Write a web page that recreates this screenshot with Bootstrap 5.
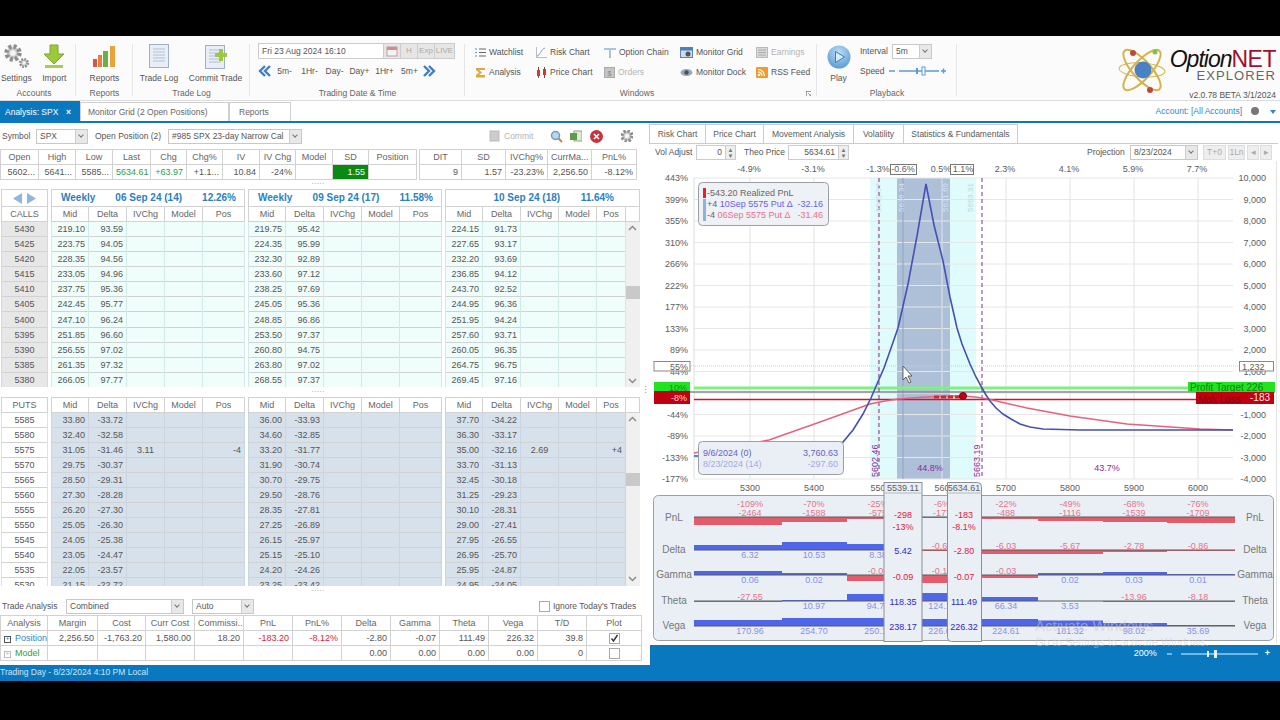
<!DOCTYPE html>
<html lang="en">
<head>
<meta charset="UTF-8">
<title>OptionNET Explorer</title>
<link href="https://cdn.jsdelivr.net/npm/bootstrap@5.3.0/dist/css/bootstrap.min.css" rel="stylesheet">
<style>
:root { --app-blue: #0a78be; --line: #d4d4d4; --ink: #555; }
html, body { height: 100%; }
body { background: #000; font-family: "Liberation Sans", Arial, sans-serif; font-size: 8.5px; color: var(--ink); overflow: hidden; }
.app-frame { margin-top: 36px; height: 645px; width: 1280px; background: #fff; display: flex; flex-direction: column; }

/* ribbon */
.ribbon-bar { height: 65px; background: #fbfbfb; border-bottom: 1px solid #ddd; display: flex; flex: none; }
.rb-group { display: flex; flex-direction: column; flex: none; position: relative; }
.rb-group::after { content: ""; position: absolute; right: 0; top: 8px; bottom: 4px; width: 1px; background: #e6e6e6; }
.rb-body { flex: 1; display: flex; }
.rb-label { height: 14px; line-height: 14px; text-align: center; color: #666; }
.rb-big { display: flex; flex-direction: column; align-items: center; justify-content: flex-end; white-space: nowrap; padding-bottom: 1px; }
.rb-big svg { display: block; margin-bottom: 3px; }
.rb-win-grid { display: grid; grid-template-columns: 61px 68px 76px 76px 60px; grid-auto-rows: 20px; padding: 6px 0 0 10px; }
.rb-win-item { display: flex; align-items: center; gap: 3px; white-space: nowrap; }
.rb-win-item svg { flex: none; }
.is-off { color: #b4b4b4; }
.date-box { display: flex; height: 16px; width: 197px; margin: 7px 0 0 8px; border: 1px solid #ccc; background: #fff; }
.date-text { flex: 1; padding-left: 3px; line-height: 14px; color: #555; }
.date-btn { width: 17px; border-left: 1px solid #ccc; background: #e6e6e6; text-align: center; line-height: 14px; color: #aaa; font-size: 8px; }
.date-nav { display: flex; align-items: center; margin: 4px 0 0 8px; height: 16px; }
.date-nav span { width: 25px; text-align: center; color: #555; }
.logo-block { margin-left: auto; width: 162px; display: flex; position: relative; }
.logo-text { margin: 11px 0 0 0; width: 109px; text-align: right; }
.logo-name { font-size: 23px; line-height: 24px; font-style: italic; color: #111; letter-spacing: -1px; white-space: nowrap; }
.logo-name b { color: #a3102f; font-style: normal; font-weight: 400; letter-spacing: -.5px; }
.logo-sub { font-size: 13px; line-height: 10px; color: #666; letter-spacing: 1.1px; }
.logo-ver { margin-top: 9px; line-height: 10px; color: #555; white-space: nowrap; }
.play-col { width: 43px; }
.speed-row { display: flex; align-items: center; gap: 2px; height: 20px; }

/* tabs */
.doc-tabs { height: 22px; flex: none; display: flex; border-bottom: 2px solid var(--app-blue); }
.doc-tab { border: 1px solid #d0d0d0; border-bottom: 0; padding: 0 7px; line-height: 18px; color: #666; margin-top: 1px; white-space: nowrap; }
.doc-tab.is-on { background: var(--app-blue); color: #fff; border-color: var(--app-blue); width: 80px; padding: 0 8px 0 4px; display: flex; justify-content: space-between; margin-top: 0; line-height: 20px; }
.acct-line { margin-left: auto; display: flex; align-items: center; color: #2f86c8; padding-right: 4px; }
.acct-dot { width: 8px; height: 8px; border-radius: 50%; background: #777; margin: 0 11px 0 9px; }
.acct-tri { border: 3px solid transparent; border-top: 4px solid #2f86c8; margin-top: 4px; }

/* panes */
.main-row { flex: 1; display: flex; min-height: 0; }
.left-pane { width: 650px; flex: none; display: flex; flex-direction: column; }
.right-pane { width: 630px; flex: none; display: flex; flex-direction: column; position: relative; }
.tool-row { height: 26px; flex: none; display: flex; align-items: center; padding-left: 2px; white-space: nowrap; }
.drop-box { display: flex; height: 15px; border: 1px solid #c8c8c8; background: #fff; align-items: stretch; flex: none; }
.drop-box > span:first-child { flex: 1; padding-left: 3px; line-height: 13px; overflow: hidden; white-space: nowrap; }
.drop-caret { width: 12px; flex: none; background: #e8e8e8; border-left: 1px solid #ccc; position: relative; }
.drop-caret::after { content: ""; position: absolute; left: 3px; top: 3px; width: 4px; height: 4px; border-right: 1px solid #777; border-bottom: 1px solid #777; transform: rotate(45deg); }

/* data grids */
table.grid-tbl { width: 100%; table-layout: fixed; margin: 0; font-size: 9px; color: var(--ink); border-color: #d2d2d2; --bs-table-color: var(--ink); --bs-table-border-color: #d2d2d2; }
table.grid-tbl > :not(caption) > * > * { padding: 0 3px; height: 15px; line-height: 14px; white-space: nowrap; overflow: hidden; border-color: var(--cell-line, #d2d2d2); vertical-align: middle; }
table.grid-tbl th { font-weight: 400; text-align: center; color: #666; background: #fff; --cell-line: #d2d2d2; }
table.grid-tbl td { text-align: right; }
.chain-grid { display: grid; grid-template-columns: 47px 194px 194px 194px; column-gap: 3px; padding-left: 1px; flex: none; overflow: hidden; }
.is-calls { height: 198px; }
.is-puts { height: 189px; }
.is-calls .chain-body td { background: #effdfb; --cell-line: #d3ebe7; }
.is-puts .chain-body td { background: #d7e1eb; --cell-line: #cbd5df; }
.is-calls table.strike-col td { background: #e7e7e7; --cell-line: #d8d8d8; text-align: center; }
.is-puts table.strike-col td { background: #fff; --cell-line: #e2e2e2; text-align: center; }
table.grid-tbl .exp-head th { height: 17px; color: #2a7fc2; font-weight: 700; font-size: 10px; }
.exp-line { display: flex; justify-content: space-between; padding: 0 5px 0 6px; text-align: left; }
.exp-line span:first-child { min-width: 33px; }
.exp-line.has-scroll { padding-right: 22px; }
.exp-line.has-scroll span:first-child { min-width: 18px; }
.exp-arrows { display: flex; justify-content: center; gap: 3px; align-items: center; }
table.grid-tbl td.scroll-cell { padding: 0; background: #f0f0f0 !important; border: 0; vertical-align: top; overflow: hidden; }
.scroll-track { display: flex; flex-direction: column; align-items: center; justify-content: space-between; padding: 3px 0; position: relative; }
.scroll-thumb { position: absolute; left: 0; right: 0; height: 13px; background: #c9c9c9; }
.grip-dots { flex: none; height: 10px; width: 636px; text-align: center; line-height: 6px; color: #999; font-size: 8px; letter-spacing: .5px; position: relative; }
.grip-tall { height: 12px; }
.grip-side { position: absolute; left: 641px; top: -2px; font-size: 9px; letter-spacing: 0; line-height: 10px; }
.quote-wrap { display: flex; gap: 2px; flex: none; height: 30px; }
table.grid-tbl.qt-a { width: 417px; flex: none; }
table.grid-tbl.qt-b { width: 218px; flex: none; }
.sd-cell { background: #0a8a12 !important; color: #fff !important; --bs-table-bg: #0a8a12; }
.txt-up { color: #2f9e3f !important; }
.txt-down { color: #e01a3c !important; }
.txt-link { color: #2f86c8 !important; }
table.grid-tbl td.txt-start { text-align: left; }
.tree-box { display: inline-block; width: 7px; height: 7px; border: 1px solid #555; margin-right: 4px; line-height: 4px; font-size: 7px; text-align: center; }
.tick-box { display: inline-block; width: 11px; height: 11px; border: 1px solid #aaa; background: #fff; vertical-align: middle; position: relative; }
.tick-box svg { position: absolute; left: 0; top: 0; }
.sum-wrap { flex: none; width: 642px; }

/* right pane */
.chart-tabs { display: flex; height: 20px; flex: none; margin: 1px 2px 0 -1px; border-bottom: 1px solid #ccc; }
.chart-tab { border: 1px solid #ccc; border-left-width: 0; border-bottom: 0; text-align: center; line-height: 19px; color: #5a5a5a; }
.chart-tab:first-child { border-left-width: 1px; }
.chart-tools { height: 17px; flex: none; display: flex; align-items: center; padding-left: 5px; white-space: nowrap; }
.spin-box { display: flex; height: 15px; border: 1px solid #ccc; background: #fff; justify-content: flex-end; flex: none; }
.spin-val { padding-right: 3px; line-height: 13px; }
.spin-btn { width: 10px; background: #eee; border-left: 1px solid #ccc; text-align: center; line-height: 6px; font-size: 6px; color: #777; padding-top: 1px; }
.proj-btn { height: 15px; border: 1px solid #ddd; background: #eee; color: #aaa; line-height: 13px; text-align: center; margin-left: 1px; flex: none; }
.chart-svg { display: block; flex: none; width: 630px; height: 484px; font-family: "Liberation Sans", Arial, sans-serif; font-size: 9px; }
.zoom-foot { height: 21px; flex: none; background: var(--app-blue); color: #fff; display: flex; align-items: center; justify-content: flex-end; padding: 0 10px 4px 0; font-size: 9px; }
.status-bar { height: 16px; flex: none; background: var(--app-blue); color: #cfe6f5; line-height: 15px; }
.win-water { position: absolute; left: 385px; bottom: 14px; color: rgba(205,205,205,.55); line-height: 17px; white-space: nowrap; font-size: 11px; pointer-events: none; }
.win-water div:first-child { font-size: 15px; }
.ax { fill: #5c5c5c; }
.ax-mid { text-anchor: middle; }
.ax-end { text-anchor: end; }
.lbl-neg { fill: #e8728c; text-anchor: middle; }
.lbl-pos { fill: #8a90e6; text-anchor: middle; }
.lbl-row { fill: #777; text-anchor: middle; font-size: 10px; }
.box-neg { fill: #e2183a; text-anchor: middle; }
.box-pos { fill: #2a2ad0; text-anchor: middle; }
</style>
</head>
<body>
<svg width="0" height="0" class="position-absolute">
  <defs>
    <g id="ic-gear"><circle r="5" fill="#c9c9c9" stroke="#8d8d8d" stroke-width="3.4" stroke-dasharray="2.2 1.7"/><circle r="2.2" fill="#f4f4f4"/></g>
    <g id="ic-doc"><rect x=".5" y=".5" width="19" height="23" fill="#e9eef6" stroke="#9fb0c4"/><path d="M4 5h12M4 8h12M4 11h12M4 14h12M4 17h12" stroke="#b3bfd0"/></g>
  </defs>
</svg>
<div class="app-frame">
  <div class="ribbon-bar">
    <div class="rb-group" style="width:76px">
      <div class="rb-body">
        <div class="rb-big" style="width:33px"><svg width="26" height="25"><g transform="translate(10,9) scale(1.3)"><use href="#ic-gear"/></g><g transform="translate(21,19) scale(.75)"><use href="#ic-gear"/></g></svg>Settings</div>
        <div class="rb-big" style="width:44px"><svg width="22" height="25"><path d="M7 1h8v9h6l-10 10L1 10h6z" fill="#9cc83c" stroke="#7fa62a"/><rect x="2" y="21" width="18" height="3" fill="#a8cc50"/></svg>Import</div>
      </div>
      <div class="rb-label" style="padding-right:8px">Accounts</div>
    </div>
    <div class="rb-group" style="width:57px">
      <div class="rb-body justify-content-center">
        <div class="rb-big"><svg width="24" height="25"><rect x="1" y="15" width="4" height="8" fill="#d9534f"/><rect x="6" y="11" width="4" height="12" fill="#e87f3a"/><rect x="11" y="7" width="5" height="16" fill="#6fae44"/><rect x="18" y="2" width="5" height="21" fill="#e8a33a"/></svg>Reports</div>
      </div>
      <div class="rb-label">Reports</div>
    </div>
    <div class="rb-group" style="width:117px">
      <div class="rb-body">
        <div class="rb-big" style="width:52px"><svg width="20" height="25"><use href="#ic-doc"/></svg>Trade Log</div>
        <div class="rb-big" style="width:61px"><svg width="28" height="25"><g transform="translate(3,1)"><use href="#ic-doc"/></g><path d="M17 5h4v4h4v4h-4v4h-4v-4h-4V9h4z" fill="#9cc83c"/></svg>Commit Trade</div>
      </div>
      <div class="rb-label">Trade Log</div>
    </div>
    <div class="rb-group" style="width:215px">
      <div class="rb-body flex-column">
        <div class="date-box"><span class="date-text">Fri 23 Aug 2024 16:10</span><span class="date-btn"><svg width="12" height="12"><rect x="1" y="2" width="10" height="9" fill="#f4f4f4" stroke="#c99"/><rect x="1" y="2" width="10" height="3" fill="#d98a8a"/></svg></span><span class="date-btn">H</span><span class="date-btn">Exp</span><span class="date-btn" style="width:20px">LIVE</span></div>
        <div class="date-nav">
          <svg width="14" height="12"><path d="M7 1L2 6l5 5M12 1L7 6l5 5" fill="none" stroke="#3f7fc4" stroke-width="2.4"/></svg>
          <span>5m-</span><span>1Hr-</span><span>Day-</span><span>Day+</span><span>1Hr+</span><span>5m+</span>
          <svg width="14" height="12"><path d="M2 1l5 5-5 5M7 1l5 5-5 5" fill="none" stroke="#3f7fc4" stroke-width="2.4"/></svg>
        </div>
      </div>
      <div class="rb-label">Trading Date &amp; Time</div>
    </div>
    <div class="rb-group" style="width:352px">
      <div class="rb-body">
        <div class="rb-win-grid">
          <div class="rb-win-item"><svg width="11" height="11"><path d="M4 2h7M4 5.500h7M4 9h7" stroke="#666"/><path d="M0 2h2M0 5.500h2M0 9h2" stroke="#5b8fc7"/></svg>Watchlist</div>
          <div class="rb-win-item"><svg width="11" height="11"><path d="M0 10.500h11M.5 0v11" stroke="#bbb"/><path d="M1 9c3 0 4-7 8-8" fill="none" stroke="#7a9ccc"/></svg>Risk Chart</div>
          <div class="rb-win-item"><svg width="12" height="11"><path d="M0 1h12v2H7v8H5V3H0z" fill="#a9c3e2"/></svg>Option Chain</div>
          <div class="rb-win-item"><svg width="13" height="11"><rect x=".5" y=".5" width="12" height="10" fill="#cfdcec" stroke="#5e86b5"/><rect x=".5" y=".5" width="12" height="3" fill="#4a7fb8"/><circle cx="8" cy="7" r="2.500" fill="#555"/></svg>Monitor Grid</div>
          <div class="rb-win-item is-off"><svg width="12" height="11"><rect x=".5" y=".5" width="11" height="10" fill="#d9d9d9" stroke="#bbb"/><path d="M2 3h8M2 5.500h8M2 8h8" stroke="#aaa"/></svg>Earnings</div>
          <div class="rb-win-item"><svg width="11" height="11"><path d="M1 1h9v2H4l3 2.500L4 8h6v2.500H1V8l3-2.500L1 3z" fill="#e0a83c"/></svg>Analysis</div>
          <div class="rb-win-item"><svg width="11" height="11"><path d="M2.500 0v11M8.500 0v11" stroke="#555"/><rect x="1" y="3" width="3" height="6" fill="#d33"/><rect x="7" y="2" width="3" height="6" fill="#d33"/></svg>Price Chart</div>
          <div class="rb-win-item is-off"><svg width="11" height="11"><rect x=".5" y=".5" width="10" height="10" fill="#c4c4c4" stroke="#aaa"/><text x="3.500" y="8.500" font-size="7" fill="#888">$</text></svg>Orders</div>
          <div class="rb-win-item"><svg width="13" height="11"><ellipse cx="6.500" cy="5.500" rx="6" ry="3.500" fill="#9aa9b8"/><circle cx="6.500" cy="5.500" r="2.200" fill="#44525f"/></svg>Monitor Dock</div>
          <div class="rb-win-item"><svg width="12" height="11"><rect width="12" height="11" rx="1" fill="#f29a2e"/><circle cx="3" cy="8" r="1.300" fill="#fff"/><path d="M2 5a4 4 0 0 1 4 4M2 2.500a6.500 6.500 0 0 1 6.500 6.500" fill="none" stroke="#fff" stroke-width="1.200"/></svg>RSS Feed</div>
        </div>
      </div>
      <div class="rb-label" style="padding-right:8px">Windows</div>
      <svg width="5" height="5" class="position-absolute" style="right:6px;bottom:4px"><path d="M0 .5h5M.5 0v5M2 2l3 3M5 3v2H3" fill="none" stroke="#888" stroke-width=".8"/></svg>
    </div>
    <div class="rb-group" style="width:140px">
      <div class="rb-body">
        <div class="rb-big play-col"><svg width="24" height="24"><defs><radialGradient id="playFill" cy=".3" r=".8"><stop offset="0" stop-color="#bcdcf4"/><stop offset="1" stop-color="#4d93cf"/></radialGradient></defs><circle cx="12" cy="12" r="11.500" fill="url(#playFill)"/><path d="M8.500 6.500v11l9-5.500z" fill="#d5ebfa" stroke="#3a7fba"/></svg>Play</div>
        <div class="flex-grow-1" style="padding-top:5px">
          <div class="speed-row"><span style="width:30px">Interval</span><div class="drop-box" style="width:40px"><span>5m</span><span class="drop-caret"></span></div></div>
          <div class="speed-row"><span style="width:26px">Speed</span><svg width="58" height="10"><path d="M1 5h6M11 5h40M53 5h5M55.500 2.500v5" stroke="#5b9bd5" stroke-width="1.400"/><rect x="28" y="2" width="2" height="6" fill="#5b9bd5"/><rect x="34" y="1" width="3" height="8" fill="#fff" stroke="#5b9bd5"/></svg></div>
        </div>
      </div>
      <div class="rb-label">Playback</div>
    </div>
    <div class="logo-block">
      <svg width="49" height="55" class="flex-none" style="margin-top:7px" viewBox="0 0 49 55"><g fill="none" stroke="#d4b44a" stroke-width="2"><ellipse cx="24" cy="27" rx="26" ry="9" transform="rotate(-48 24 27)"/><ellipse cx="24" cy="27" rx="26" ry="9" transform="rotate(48 24 27)"/><ellipse cx="24" cy="27" rx="23" ry="7" transform="rotate(4 24 27)" stroke-width="1"/></g><circle cx="25" cy="27" r="8.500" fill="#4a80c4"/><circle cx="15" cy="10" r="3" fill="#c0483a"/><circle cx="37" cy="9" r="2.500" fill="#7ec04a"/><circle cx="32" cy="47" r="3" fill="#c0483a"/></svg>
      <div class="logo-text">
        <div class="logo-name">Option<b>NET</b></div>
        <div class="logo-sub">EXPLORER</div>
        <div class="logo-ver">v2.0.78 BETA 3/1/2024</div>
      </div>
    </div>
  </div>

  <div class="doc-tabs">
    <div class="doc-tab is-on"><span>Analysis: SPX</span><span class="fw-bold">×</span></div>
    <div class="doc-tab" style="width:149px">Monitor Grid (2 Open Positions)</div>
    <div class="doc-tab" style="width:62px;padding-left:9px">Reports</div>
    <div class="acct-line">Account: [All Accounts]<span class="acct-dot"></span><span class="acct-tri"></span></div>
  </div>

  <div class="main-row">
    <div class="left-pane">
      <div class="tool-row">
        <span style="width:34px">Symbol</span>
        <div class="drop-box" style="width:52px"><span>SPX</span><span class="drop-caret"></span></div>
        <span style="margin-left:7px;width:73px">Open Position (2)</span>
        <div class="drop-box" style="width:134px"><span>#985 SPX 23-day Narrow Cal</span><span class="drop-caret"></span></div>
        <svg width="11" height="12" style="margin-left:187px"><rect x="1" y="1" width="9" height="10" fill="#ccc" stroke="#bbb"/></svg>
        <span class="is-off" style="margin-left:4px;width:28px">Commit</span>
        <svg width="13" height="13" style="margin-left:18px"><circle cx="5.500" cy="5.500" r="4" fill="#bcd6ee" stroke="#6f9ac4" stroke-width="1.500"/><path d="M8.500 8.500l3.500 3.500" stroke="#c08a3a" stroke-width="2"/></svg>
        <svg width="12" height="12" style="margin-left:7px"><rect x="4" y="1" width="8" height="10" fill="#dfe9d8" stroke="#8aaa7a"/><rect x="0" y="3" width="7" height="7" fill="#5f9a4a"/></svg>
        <svg width="13" height="13" style="margin-left:8px"><circle cx="6.500" cy="6.500" r="6.500" fill="#c9323c"/><path d="M4 4l5 5M9 4L4 9" stroke="#fff" stroke-width="1.600"/></svg>
        <svg width="12" height="12" style="margin-left:18px" viewBox="-6 -6 12 12"><use href="#ic-gear"/></svg>
      </div>
      <div class="quote-wrap">
        <table class="table table-bordered grid-tbl qt-a">
          <colgroup><col style="width:38px"><col style="width:37px"><col style="width:37px"><col style="width:38px"><col style="width:36px"><col style="width:36px"><col style="width:37px"><col style="width:36px"><col style="width:37px"><col style="width:36px"><col></colgroup>
          <thead><tr><th>Open</th><th>High</th><th>Low</th><th>Last</th><th>Chg</th><th>Chg%</th><th>IV</th><th>IV Chg</th><th>Model</th><th>SD</th><th>Position</th></tr></thead>
          <tbody><tr><td>5602...</td><td>5641...</td><td>5585...</td><td class="txt-up">5634.61</td><td class="txt-up">+63.97</td><td>+1.1...</td><td>10.84</td><td>-24%</td><td></td><td class="sd-cell">1.55</td><td></td></tr></tbody>
        </table>
        <table class="table table-bordered grid-tbl qt-b">
          <colgroup><col style="width:42px"><col style="width:44px"><col style="width:42px"><col style="width:44px"><col></colgroup>
          <thead><tr><th>DIT</th><th>SD</th><th>IVChg%</th><th>CurrMa...</th><th>PnL%</th></tr></thead>
          <tbody><tr><td>9</td><td>1.57</td><td>-23.23%</td><td>2,256.50</td><td>-8.12%</td></tr></tbody>
        </table>
      </div>
      <div class="grip-dots">.....</div>
      <div class="chain-grid is-calls" id="callGrid"></div>
      <div class="grip-dots">.....<span class="grip-side">⋮</span></div>
      <div class="chain-grid is-puts" id="putGrid"></div>
      <div class="grip-dots grip-tall">.....</div>
      <div class="tool-row" style="height:17px">
        <span style="width:64px">Trade Analysis</span>
        <div class="drop-box" style="width:118px"><span>Combined</span><span class="drop-caret"></span></div>
        <div class="drop-box" style="width:62px;margin-left:8px"><span>Auto</span><span class="drop-caret"></span></div>
        <span class="tick-box" style="margin-left:285px"></span>
        <span style="margin-left:3px">Ignore Today's Trades</span>
      </div>
      <div class="sum-wrap">
        <table class="table table-bordered grid-tbl">
          <colgroup><col style="width:47px"><col style="width:50px"><col style="width:48px"><col style="width:49px"><col style="width:49px"><col style="width:49px"><col style="width:49px"><col style="width:49px"><col style="width:49px"><col style="width:49px"><col style="width:49px"><col style="width:49px"><col></colgroup>
          <thead><tr><th>Analysis</th><th>Margin</th><th>Cost</th><th>Curr Cost</th><th>Commissi...</th><th>PnL</th><th>PnL%</th><th>Delta</th><th>Gamma</th><th>Theta</th><th>Vega</th><th>T/D</th><th>Plot</th></tr></thead>
          <tbody>
            <tr><td class="txt-start txt-link"><span class="tree-box">+</span>Position</td><td>2,256.50</td><td>-1,763.20</td><td>1,580.00</td><td>18.20</td><td class="txt-down">-183.20</td><td class="txt-down">-8.12%</td><td>-2.80</td><td>-0.07</td><td>111.49</td><td>226.32</td><td>39.8</td><td class="text-center"><span class="tick-box"><svg width="9" height="9"><path d="M1.500 4.500l2 2.500 4-6" fill="none" stroke="#333" stroke-width="1.400"/></svg></span></td></tr>
            <tr><td class="txt-start txt-up"><span class="tree-box" style="border-color:#bbb;color:#bbb">+</span>Model</td><td></td><td></td><td></td><td></td><td></td><td></td><td>0.00</td><td>0.00</td><td>0.00</td><td>0.00</td><td>0</td><td class="text-center"><span class="tick-box"></span></td></tr>
          </tbody>
        </table>
      </div>
    </div>

    <div class="right-pane">
      <div class="chart-tabs">
        <div class="chart-tab" style="width:57px">Risk Chart</div>
        <div class="chart-tab" style="width:58px">Price Chart</div>
        <div class="chart-tab" style="width:90px">Movement Analysis</div>
        <div class="chart-tab" style="width:50px">Volatility</div>
        <div class="chart-tab" style="width:114px">Statistics &amp; Fundamentals</div>
      </div>
      <div class="chart-tools">
        <span style="width:41px">Vol Adjust</span>
        <div class="spin-box" style="width:40px"><span class="spin-val">0</span><span class="spin-btn">▲<br>▼</span></div>
        <span style="margin-left:8px;width:44px">Theo Price</span>
        <div class="spin-box" style="width:61px"><span class="spin-val">5634.61</span><span class="spin-btn">▲<br>▼</span></div>
        <span style="margin-left:238px;width:43px">Projection</span>
        <div class="drop-box" style="width:68px"><span>8/23/2024</span><span class="drop-caret"></span></div>
        <div class="proj-btn" style="width:23px;margin-left:5px">T+0</div>
        <div class="proj-btn" style="width:17px;margin-left:2px">1Ln</div>
        <div class="proj-btn" style="width:12px;margin-left:2px">◂</div>
        <div class="proj-btn" style="width:12px">▸</div>
      </div>
      <svg class="chart-svg" viewBox="650 160 630 484">
        <path d="M1276.500 160V642" stroke="#e2e2e2"/>
        <rect x="870" y="177" width="106" height="301" fill="#dffbfb"/>
        <rect x="897" y="177" width="53" height="301" fill="#aebfd8"/>
        <g id="plotGrid"></g>
        <path d="M903 177v301" stroke="#8fa3bf"/>
        <path d="M942 177v301" stroke="#c8d4e4"/>
        <path d="M655 365h618" stroke="#cfcfcf" stroke-dasharray="1 1"/>
        <path d="M694 387h540" stroke="#7df27d" stroke-width="3"/>
        <path d="M655 391h620" stroke="#8a8a8a" stroke-width="1.400"/>
        <path d="M694 398.500h540" stroke="#d8102c" stroke-width="1.400"/>
        <path d="M879 177v301M982 177v301" stroke="#8a2a8a" stroke-dasharray="4 3"/>
        <g fill="#cfe2e8" font-size="8">
          <text transform="translate(881,211) rotate(-90)">5502.97</text>
          <text transform="translate(904,211) rotate(-90)" fill="#d8e2ee">5636.34</text>
          <text transform="translate(948,211) rotate(-90)" fill="#d8e2ee">5631.69</text>
          <text transform="translate(973,211) rotate(-90)" fill="#bfd8d8">5663.31</text>
        </g>
        <text transform="translate(878,476) rotate(-90)" fill="#8a2a9a">5602.46</text>
        <text transform="translate(980,476) rotate(-90)" fill="#8a2a9a">5663.19</text>
        <text x="930" y="470" class="ax-mid" fill="#8a2a9a">44.8%</text>
        <text x="1107" y="470" class="ax-mid" fill="#8a2a9a">43.7%</text>
        <polyline fill="none" stroke="#e8607a" stroke-width="1.400" points="694,452 769,439 820,421 870,403 885,400 898,398 925,396 950,395 963,395 975,396 988,398 1005,402 1027,407 1070,415 1127,423 1200,428 1233,429"/>
        <polyline fill="none" stroke="#4650b4" stroke-width="1.600" points="694,455 770,455 825,451 843,441 853,429 863,413 871,397 877,383 884,367 890,350 898,327 908,283 917,235 926,183 934,224 943,260 950,296 957,327 962,343 970,363 976,376 982,387 986,394 990,400 996,407 1003,413 1011,418 1020,423 1030,426 1043,428 1080,429 1233,429"/>
        <path d="M934 396h26" stroke="#e2202e" stroke-width="3" stroke-dasharray="5 2"/>
        <circle cx="963" cy="395" r="3.500" fill="#c40012" stroke="#7a0010"/>
        <rect x="654" y="360.500" width="36" height="9.500" fill="#fff" stroke="#888"/>
        <text x="688" y="369" class="ax ax-end">55%</text>
        <rect x="654" y="381" width="36" height="9" fill="#22e322"/>
        <rect x="654" y="390" width="36" height="13" fill="#c00010"/>
        <text x="687" y="389.500" class="ax-end" fill="#188a18">10%</text>
        <text x="687" y="399.500" class="ax-end" fill="#ffd8d8">-8%</text>
        <rect x="1188" y="381" width="87" height="10" fill="#22e322"/>
        <text x="1190" y="390" fill="#128012" font-size="10">Profit Target 226</text>
        <rect x="1196" y="391" width="78" height="12" fill="#c00010"/>
        <text x="1198" y="402" fill="#7c0010" font-size="10">Max Loss</text>
        <text x="1270" y="400" class="ax-end" fill="#ffe8e8" font-size="10">-183</text>
        <rect x="1239.500" y="360.500" width="34" height="9.500" fill="#fff" stroke="#888"/>
        <text x="1242" y="369" class="ax">1,232</text>
        <rect x="698.500" y="181.500" width="130" height="43" rx="4" fill="#eef1f5" stroke="#9a9fa6"/>
        <rect x="703" y="187" width="3" height="10" fill="#e2202e"/><rect x="703" y="198" width="3" height="22" fill="#8fb0e0"/>
        <text x="707" y="195" fill="#666">-543.20 Realized PnL</text>
        <text x="707" y="206" fill="#666">+4 <tspan fill="#6a60e8">10Sep 5575 Put Δ</tspan></text><text x="823" y="206" class="ax-end" fill="#6a60e8">-32.16</text>
        <text x="707" y="217" fill="#666">-4 <tspan fill="#e8728c">06Sep 5575 Put Δ</tspan></text><text x="823" y="217" class="ax-end" fill="#e8728c">-31.46</text>
        <rect x="698.500" y="440.500" width="145" height="33" rx="4" fill="#e9eff5" stroke="#9a9fa6"/>
        <text x="703" y="455" fill="#6a60c8">9/6/2024 (0)</text><text x="838" y="455" class="ax-end" fill="#6a60c8">3,760.63</text>
        <text x="703" y="466" fill="#a4a8e4">8/23/2024 (14)</text><text x="838" y="466" class="ax-end" fill="#a4a8e4">-297.60</text>
        <path d="M903 365v14l3-3 3 6 2-1-3-6 4 0z" fill="#fff" stroke="#444" stroke-width=".8"/>
        <rect x="653.500" y="494.500" width="620" height="145" rx="5" fill="#e9eff5" stroke="#9aa0a6"/>
        <g id="greekRows"></g>
        <rect x="884" y="481.500" width="38" height="159" fill="#e9eff5" stroke="#8a8f94"/>
        <text x="903" y="490" class="ax ax-mid">5539.11</text>
        <path d="M884 492h38" stroke="#b5b9be"/>
        <path d="M947.500 481.500h30a4 4 0 0 1 4 4v155h-30a4 4 0 0 1-4-4z" fill="#e9eff5" stroke="#8a8f94"/>
        <text x="964" y="490" class="ax ax-mid">5634.61</text>
        <path d="M946 492h36" stroke="#b5b9be"/>
        <g id="boxVals"></g>
      </svg>
      <div class="zoom-foot">
        <span style="margin-right:10px">200%</span>
        <svg width="94" height="10"><path d="M0 5h5M14 5h77" stroke="#e8f3fb"/><rect x="40" y="2" width="2" height="6" fill="#e8f3fb"/><rect x="47" y="1" width="3" height="8" fill="#e8f3fb"/></svg>
        <span class="ms-1 fw-bold">+</span>
      </div>
      <div class="win-water"><div>Activate Windows</div><div>Go to Settings to activate Windows.</div></div>
    </div>
  </div>
  <div class="status-bar">Trading Day - 8/23/2024 4:10 PM Local</div>
</div>

<script src="https://cdn.jsdelivr.net/npm/bootstrap@5.3.0/dist/js/bootstrap.bundle.min.js"></script>
<script>
    const callStrikes = [5430,5425,5420,5415,5410,5405,5400,5395,5390,5385,5380];
    const putStrikes = [5585,5580,5575,5570,5565,5560,5555,5550,5545,5540,5535,5530];

    const callData = [
        ['219.10 93.59','223.75 94.05','228.35 94.56','233.05 94.96','237.75 95.36','242.45 95.77','247.10 96.24','251.85 96.60','256.55 97.02','261.35 97.32','266.05 97.77'],
        ['219.75 95.42','224.35 95.99','232.30 92.89','233.60 97.12','238.25 97.69','245.05 95.36','248.85 96.86','253.50 97.37','260.80 94.75','263.80 97.02','268.55 97.37'],
        ['224.15 91.73','227.65 93.17','232.20 93.69','236.85 94.12','243.70 92.52','244.95 96.36','251.95 94.24','257.60 93.71','260.05 96.35','264.75 96.75','269.45 97.16']
    ];
    const putData = [
        ['33.80 -33.72','32.40 -32.58','31.05 -31.46 3.11 -4','29.75 -30.37','28.50 -29.31','27.30 -28.28','26.20 -27.30','25.05 -26.30','24.05 -25.38','23.05 -24.47','22.05 -23.57','21.15 -22.72'],
        ['36.00 -33.93','34.60 -32.85','33.20 -31.77','31.90 -30.74','30.70 -29.75','29.50 -28.76','28.35 -27.81','27.25 -26.89','26.15 -25.97','25.15 -25.10','24.20 -24.26','23.25 -23.42'],
        ['37.70 -34.22','36.30 -33.17','35.00 -32.16 2.69 +4','33.70 -31.13','32.45 -30.18','31.25 -29.23','30.10 -28.31','29.00 -27.41','27.95 -26.55','26.95 -25.70','25.95 -24.87','24.95 -24.05']
    ];
    const expiries = [
        ['Weekly','06 Sep 24 (14)','12.26%'],
        ['Weekly','09 Sep 24 (17)','11.58%'],
        ['','10 Sep 24 (18)','11.64%']
    ];

    const chevUp = '<svg width="9" height="6"><path d="M1 5l3.500-3.500L8 5" fill="none" stroke="#888" stroke-width="1.400"/></svg>';
    const chevDown = '<svg width="9" height="6"><path d="M1 1l3.500 3.500L8 1" fill="none" stroke="#888" stroke-width="1.400"/></svg>';

    function strikeTable(title, strikes, withNav) {
        let head = '<tr><th>' + title + '</th></tr>';
        if (withNav) {
            head = '<tr class="exp-head"><th><div class="exp-arrows"><svg width="11" height="11"><path d="M10 0v11L1 5.500z" fill="#8db6e0"/></svg><svg width="11" height="11"><path d="M1 0v11l9-5.500z" fill="#8db6e0"/></svg></div></th></tr>' + head;
        }
        const rows = strikes.map(s => '<tr><td>' + s + '</td></tr>').join('');
        return '<table class="table table-bordered grid-tbl strike-col"><thead>' + head + '</thead><tbody>' + rows + '</tbody></table>';
    }

    function chainTable(rows, exp, scrollOpts) {
        const cols = scrollOpts ? 6 : 5;
        let cg = '<colgroup><col style="width:37px"><col style="width:38px"><col style="width:38px">' +
            '<col style="width:38px">' + (scrollOpts ? '<col style="width:29px"><col style="width:14px">' : '<col>') + '</colgroup>';
        let head = '';
        if (exp) {
            head += '<tr class="exp-head"><th colspan="' + cols + '"><div class="exp-line' + (scrollOpts ? ' has-scroll' : '') + '">' +
                '<span>' + exp[0] + '</span><span>' + exp[1] + '</span><span>' + exp[2] + '</span></div></th></tr>';
        }
        head += '<tr><th>Mid</th><th>Delta</th><th>IVChg</th><th>Model</th><th>Pos</th>' + (scrollOpts ? '<th></th>' : '') + '</tr>';
        const body = rows.map((r, i) => {
            const p = r.split(' ');
            let tr = '<tr><td>' + p[0] + '</td><td>' + p[1] + '</td><td class="text-center">' + (p[2] || '') + '</td><td></td><td>' + (p[3] || '') + '</td>';
            if (scrollOpts && i === 0) {
                tr += '<td class="scroll-cell" rowspan="' + rows.length + '"><div class="scroll-track" style="height:' + scrollOpts.h + 'px">' +
                    chevUp + '<div class="scroll-thumb" style="top:' + scrollOpts.top + 'px"></div>' + chevDown + '</div></td>';
            }
            return tr + '</tr>';
        }).join('');
        return '<table class="table table-bordered grid-tbl">' + cg + '<thead>' + head + '</thead><tbody class="chain-body">' + body + '</tbody></table>';
    }

    document.getElementById('callGrid').innerHTML = strikeTable('CALLS', callStrikes, true) +
        callData.map((d, i) => chainTable(d, expiries[i], i === 2 ? {h: 165, top: 64} : null)).join('');
    document.getElementById('putGrid').innerHTML = strikeTable('PUTS', putStrikes, false) +
        putData.map((d, i) => chainTable(d, null, i === 2 ? {h: 172, top: 60} : null)).join('');

    // chart grid and axis labels
    const gridParts = [];
    const strikeX = {5300: 750, 5400: 814, 5500: 878, 5600: 942, 5700: 1006, 5800: 1070, 5900: 1134, 6000: 1198};
    const leftLabels = ['443%','399%','355%','310%','266%','222%','177%','133%','89%','44%','','-44%','-89%','-133%','-177%'];
    const rightLabels = ['10,000','9,000','8,000','7,000','6,000','5,000','4,000','3,000','2,000','1,000','','-1,000','-2,000','-3,000','-4,000'];
    for (let i = 0; i < 15; i++) {
        const y = 177 + i * 21.5;
        gridParts.push('<path d="M694 ' + y + 'H1233" stroke="#e6e6e6"/>');
        if (rightLabels[i]) gridParts.push('<text x="1266" y="' + (y + 3) + '" class="ax ax-end">' + rightLabels[i] + '</text>');
        if (leftLabels[i]) gridParts.push('<text x="688" y="' + (y + 3) + '" class="ax ax-end">' + leftLabels[i] + '</text>');
    }
    Object.entries(strikeX).forEach(([s, x]) => {
        gridParts.push('<path d="M' + x + ' 177V478" stroke="#e2e2e2"/>');
        gridParts.push('<text x="' + x + '" y="490" class="ax ax-mid">' + (s === '5500' ? '550' : s === '5600' ? '560' : s) + '</text>');
    });
    gridParts.push('<path d="M694 177V478" stroke="#dcdcdc"/>');
    [['-4.9%',749],['-3.1%',813],['-1.3%',878],['0.5%',941],['2.3%',1005],['4.1%',1069],['5.9%',1133],['7.7%',1197]].forEach(p => {
        gridParts.push('<text x="' + p[1] + '" y="171" class="ax ax-mid">' + p[0] + '</text>');
    });
    [['-0.6%',903],['1.1%',963]].forEach(p => {
        gridParts.push('<rect x="' + (p[1] - 13) + '.5" y="163.500" width="' + (p[0].length > 4 ? 26 : 23) + '" height="10" fill="#fff" stroke="#777"/>');
        gridParts.push('<text x="' + p[1] + '" y="171" class="ax ax-mid">' + p[0] + '</text>');
    });
    document.getElementById('plotGrid').innerHTML = gridParts.join('');

    // greek rows: [name, baseline, labels, bar heights (negative goes below), pnl percents]
    const segs = [694, 782, 847, 910, 974, 1038, 1103, 1167, 1235];
    const centers = Object.values(strikeX);
    const greeks = [
        ['PnL', 516, ['-2464','-1588','-575','-177','-488','-1116','-1539','-1709'], [-8,-5,-2,-1,-2,-4,-5,-6], ['-109%','-70%','-25%','-6%','-22%','-49%','-68%','-76%']],
        ['Delta', 549, ['6.32','10.53','8.38','-0.60','-6.03','-5.67','-2.78','-0.86'], [5,8,6,-1,-4,-4,-2,-1]],
        ['Gamma', 574, ['0.06','0.02','-0.09','-0.10','-0.03','0.02','0.03','0.01'], [4,2,-6,-8,-3,2,3,1]],
        ['Theta', 600, ['-27.55','10.97','94.72','124.16','66.34','3.53','-13.96','-8.18'], [-1,1,7,8,4,0,-1,-1]],
        ['Vega', 625, ['170.96','254.70','250.14','226.02','224.61','181.32','98.02','35.69'], [6,8,8,7,7,5.500,3,1]]
    ];
    const greekSvg = [];
    greeks.forEach(g => {
        const [name, base, labels, bars, pct] = g;
        const labelY = name === 'PnL' ? 520 : base + 3;
        greekSvg.push('<text x="674" y="' + labelY + '" class="lbl-row">' + name + '</text>');
        greekSvg.push('<text x="1255" y="' + labelY + '" class="lbl-row">' + name + '</text>');
        bars.forEach((h, i) => {
            const y = h > 0 ? base - h : base;
            greekSvg.push('<rect x="' + segs[i] + '" y="' + y + '" width="' + (segs[i + 1] - segs[i]) + '" height="' + Math.abs(h) + '" fill="' + (h > 0 ? '#4f66e8' : '#e45c6b') + '"/>');
            const neg = labels[i].charAt(0) === '-';
            const ty = neg ? base - 1 : base + 8;
            greekSvg.push('<text x="' + centers[i] + '" y="' + ty + '" class="' + (neg ? 'lbl-neg' : 'lbl-pos') + '">' + labels[i] + '</text>');
            if (pct) greekSvg.push('<text x="' + centers[i] + '" y="506" class="lbl-neg">' + pct[i] + '</text>');
        });
        greekSvg.push('<path d="M694 ' + base + 'H1235" stroke="#5a5a5a" stroke-width="1"/>');
    });
    document.getElementById('greekRows').innerHTML = greekSvg.join('');

    const boxRows = [[517,'-298','-183','box-neg'],[529,'-13%','-8.1%','box-neg'],[553,'5.42','-2.80',null],[579,'-0.09','-0.07','box-neg'],[604,'118.35','111.49','box-pos'],[629,'238.17','226.32','box-pos']];
    document.getElementById('boxVals').innerHTML = boxRows.map(r =>
        '<text x="903" y="' + r[0] + '" class="' + (r[3] || 'box-pos') + '">' + r[1] + '</text>' +
        '<text x="964" y="' + r[0] + '" class="' + (r[3] || 'box-neg') + '">' + r[2] + '</text>'
    ).join('');
</script>
</body>
</html>
